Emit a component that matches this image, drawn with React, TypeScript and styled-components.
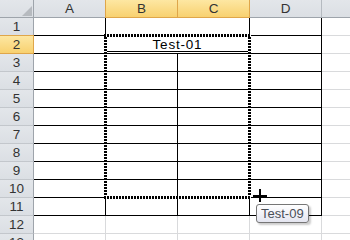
import styled, { createGlobalStyle } from "styled-components";

const GlobalStyle = createGlobalStyle`
  html, body {
    margin: 0;
    padding: 0;
    background: #fff;
  }
  body {
    width: 350px;
    height: 240px;
    overflow: hidden;
    font-family: "Liberation Sans", Arial, sans-serif;
  }
`;

const HEAD_W = 34;
const COL_W = 72;
const ROW_H = 18;

type Line = "black" | "grid" | "double";

const line = (l: Line) =>
  l === "black" ? "1px solid #000" : l === "double" ? "3px double #000" : "1px solid #d9dadc";

const Sheet = styled.div`
  position: relative;
  display: grid;
  grid-template-columns: ${HEAD_W}px repeat(5, ${COL_W}px);
  grid-auto-rows: ${ROW_H}px;
  width: 350px;
  height: 240px;
  overflow: hidden;
`;

const headerBg = "linear-gradient(#e3e6ea, #dbdfe4)";
const selectedBg = "linear-gradient(#fde7a2, #f8d170)";
const selectedEdge = "#dfa64a";

const Corner = styled.div`
  position: relative;
  box-sizing: border-box;
  background: ${headerBg};
  border-right: 1px solid #9ea4ab;
  border-bottom: 1px solid #9ea4ab;

  &::after {
    content: "";
    position: absolute;
    right: 1px;
    bottom: 1px;
    border-left: 10px solid transparent;
    border-bottom: 10px solid #b6babf;
  }
`;

const ColHeader = styled.div<{ $selected?: boolean }>`
  box-sizing: border-box;
  display: flex;
  align-items: center;
  justify-content: center;
  font-size: 13.5px;
  color: #333;
  background: ${(p) => (p.$selected ? selectedBg : headerBg)};
  border-right: 1px solid ${(p) => (p.$selected ? selectedEdge : "#b5bac0")};
  border-bottom: 1px solid ${(p) => (p.$selected ? selectedEdge : "#9ea4ab")};
  box-shadow: ${(p) => (p.$selected ? `-1px 0 0 ${selectedEdge}` : "none")};
`;

const RowHeader = styled.div<{ $selected?: boolean }>`
  box-sizing: border-box;
  display: flex;
  align-items: center;
  justify-content: center;
  font-size: 13.5px;
  color: #333;
  background: ${(p) => (p.$selected ? selectedBg : headerBg)};
  border-right: 1px solid ${(p) => (p.$selected ? selectedEdge : "#9ea4ab")};
  border-bottom: 1px solid ${(p) => (p.$selected ? selectedEdge : "#c3c7cc")};
  box-shadow: ${(p) => (p.$selected ? `0 -1px 0 ${selectedEdge}` : "none")};
`;

const Cell = styled.div<{ $right: Line; $bottom: Line; $span?: number }>`
  box-sizing: border-box;
  grid-column: span ${(p) => p.$span ?? 1};
  display: flex;
  align-items: center;
  justify-content: center;
  padding-top: 1px;
  font-size: 13.5px;
  letter-spacing: 0.8px;
  color: #000;
  border-right: ${(p) => line(p.$right)};
  border-bottom: ${(p) => line(p.$bottom)};
`;

// copy marquee around B2:C10
const Marquee = styled.div`
  position: absolute;
  left: ${HEAD_W + COL_W - 2}px;
  top: ${ROW_H * 2 - 2}px;
  width: ${COL_W * 2 + 3}px;
  height: ${ROW_H * 9 + 3}px;
  pointer-events: none;
  background-image:
    repeating-linear-gradient(90deg, #000 0 2px, #fff 2px 3px),
    repeating-linear-gradient(90deg, #000 0 2px, #fff 2px 3px),
    repeating-linear-gradient(180deg, #000 0 2px, #fff 2px 3px),
    repeating-linear-gradient(180deg, #000 0 2px, #fff 2px 3px);
  background-size: 100% 3px, 100% 3px, 3px 100%, 3px 100%;
  background-position: top left, bottom left, top left, top right;
  background-repeat: no-repeat;
`;

const Cursor = styled.svg`
  position: absolute;
  left: 253px;
  top: 189px;
`;

const Tooltip = styled.div`
  position: absolute;
  left: 256px;
  top: 204px;
  height: 17px;
  padding: 0 4px;
  display: flex;
  align-items: center;
  font-size: 13px;
  color: #4a4f58;
  background: linear-gradient(#ffffff, #e4e5f0);
  border: 1px solid #767676;
  border-radius: 3px;
  box-shadow: 2px 2px 2px rgba(0, 0, 0, 0.2);
`;

const COLS = ["A", "B", "C", "D", ""];

const renderRow = (r: number) => {
  const cells = [];
  if (r === 1 || r === 2) {
    cells.push(<Cell key="a" $right="black" $bottom="black" />);
    cells.push(
      <Cell key="bc" $span={2} $right="black" $bottom={r === 2 ? "double" : "black"}>
        {r === 2 ? "Test-01" : ""}
      </Cell>
    );
    cells.push(<Cell key="d" $right="black" $bottom="black" />);
  } else if (r <= 11) {
    ["a", "b", "c", "d"].forEach((k) =>
      cells.push(<Cell key={k} $right="black" $bottom="black" />)
    );
  } else {
    ["a", "b", "c", "d"].forEach((k) =>
      cells.push(<Cell key={k} $right="grid" $bottom="grid" />)
    );
  }
  cells.push(<Cell key="e" $right="grid" $bottom="grid" />);
  return cells;
};

export default function App() {
  const rows = Array.from({ length: 13 }, (_, i) => i + 1);
  return (
    <>
      <GlobalStyle />
      <Sheet>
        <Corner />
        {COLS.map((c, i) => (
          <ColHeader key={i} $selected={c === "B" || c === "C"}>
            {c}
          </ColHeader>
        ))}
        {rows.map((r) => [
          <RowHeader key={`h${r}`} $selected={r === 2}>
            {r}
          </RowHeader>,
          ...renderRow(r),
        ])}
        <Marquee />
        <Cursor width="14" height="14" viewBox="0 0 14 14">
          <rect x="0" y="6" width="14" height="2" fill="#000" />
          <rect x="6" y="0" width="2" height="13" fill="#000" />
        </Cursor>
        <Tooltip>Test-09</Tooltip>
      </Sheet>
    </>
  );
}
